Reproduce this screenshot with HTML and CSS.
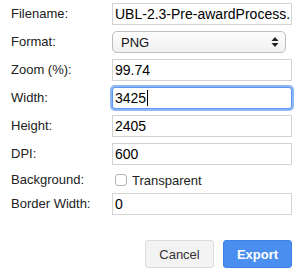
FILE: index.html
```html
<!DOCTYPE html>
<html>
<head>
<meta charset="utf-8">
<link rel="stylesheet" href="styles.css">
</head>
<body>
<div class="dialog">
  <div class="form">
    <label class="lbl">Filename:</label>
    <div class="field"><input class="txt" type="text" value="UBL-2.3-Pre-awardProcess.png"></div>

    <label class="lbl">Format:</label>
    <div class="field">
      <div class="select"><span>PNG</span>
        <svg class="arrows" width="8" height="12" viewBox="0 0 8 12"><path d="M4 1 L7.5 5 H0.5 Z M4 11 L7.5 7 H0.5 Z" fill="#222"/></svg>
      </div>
    </div>

    <label class="lbl">Zoom (%):</label>
    <div class="field"><input class="txt" type="text" value="99.74"></div>

    <label class="lbl">Width:</label>
    <div class="field"><div class="txt focus">3425<span class="caret"></span></div></div>

    <label class="lbl">Height:</label>
    <div class="field"><input class="txt" type="text" value="2405"></div>

    <label class="lbl">DPI:</label>
    <div class="field"><input class="txt" type="text" value="600"></div>

    <label class="lbl short">Background:</label>
    <div class="field short"><span class="check"></span><span class="cklbl">Transparent</span></div>

    <label class="lbl">Border Width:</label>
    <div class="field"><input class="txt" type="text" value="0"></div>
  </div>
  <div class="buttons">
    <button class="btn cancel">Cancel</button>
    <button class="btn export">Export</button>
  </div>
</div>
</body>
</html>
```
FILE: styles.css
```css
html, body {
  margin: 0;
  padding: 0;
  background: #fff;
}
body {
  font-family: "Liberation Sans", Arial, Helvetica, sans-serif;
  font-size: 13px;
  color: #1a1a1a;
}
.dialog {
  width: 300px;
  height: 275px;
  box-sizing: border-box;
  padding: 3px 8px 0 8px;
}
.form {
  display: grid;
  grid-template-columns: 104px 180px;
  grid-template-rows: repeat(6, 22px) 16px 22px;
  row-gap: 6px;
  align-items: center;
}
.lbl {
  padding-left: 3px;
  color: #222;
  line-height: 16px;
}
.lbl.short {
  padding-top: 2px;
}
.field {
  height: 22px;
  display: flex;
  align-items: center;
}
.field.short {
  height: 16px;
  padding-top: 2px;
}
.txt {
  box-sizing: border-box;
  width: 180px;
  height: 22px;
  margin: 0;
  border: 1px solid #d3d3d3;
  padding: 0 1px 0 2px;
  font-family: "Liberation Sans", Arial, sans-serif;
  font-size: 14px;
  color: #000;
  background: #fff;
  outline: none;
  display: flex;
  align-items: center;
}
.focus {
  border-color: #5c98ef;
  border-radius: 3px;
  box-shadow: 0 0 0 2px #8db6f4;
}
.caret {
  display: inline-block;
  width: 1px;
  height: 16px;
  background: #000;
  margin-left: 1px;
}
.select {
  box-sizing: border-box;
  width: 174px;
  height: 22px;
  border: 1px solid #bdbdbd;
  border-radius: 5px;
  background: linear-gradient(#fdfdfd, #f1f1f1);
  display: flex;
  align-items: center;
  justify-content: space-between;
  padding: 0 6px 0 8px;
  color: #111;
}
.arrows {
  display: block;
}
.check {
  box-sizing: border-box;
  width: 12px;
  height: 12px;
  border: 1px solid #b5b5b5;
  border-radius: 3px;
  background: #fff;
  margin-left: 3px;
  margin-right: 5px;
}
.cklbl {
  color: #222;
}
.buttons {
  display: flex;
  justify-content: flex-end;
  gap: 9px;
  margin-top: 25px;
}
.btn {
  box-sizing: border-box;
  width: 69px;
  height: 28px;
  border-radius: 3px;
  font-family: "Liberation Sans", Arial, sans-serif;
  font-size: 13px;
  padding: 0;
  cursor: pointer;
}
.cancel {
  background: #f3f3f3;
  border: 1px solid #dcdcdc;
  color: #333;
}
.export {
  background: #4a8ff0;
  border: 1px solid #3f82e6;
  color: #fff;
  font-weight: bold;
}
```
